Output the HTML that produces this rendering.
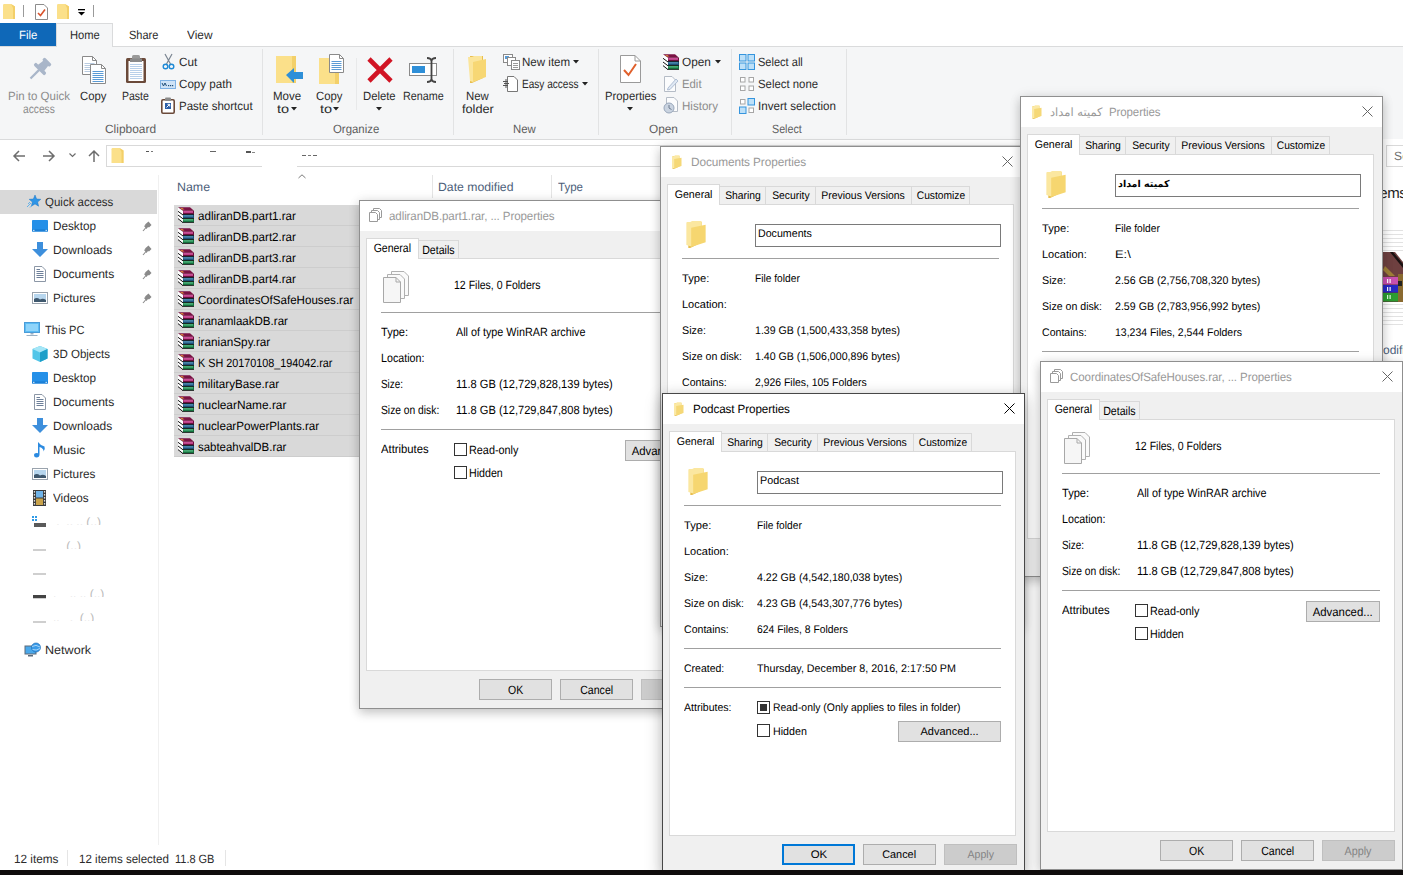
<!DOCTYPE html>
<html lang="en"><head><meta charset="utf-8"><title>Properties</title>
<style>
html,body{margin:0;padding:0}
body{width:1403px;height:875px;overflow:hidden;position:relative;background:#fff;-webkit-font-smoothing:antialiased;text-rendering:geometricPrecision;font-family:"Liberation Sans","DejaVu Sans",sans-serif;font-size:12px;color:#000}
.a,.t,.s,.m{position:absolute}
.t,.s,.m{white-space:nowrap;line-height:16px;height:16px}
.t{font-size:12px;color:#2b2b2b}
.s{font-size:12px;color:#000}
.m{font-size:11px;color:#000}
.g{color:#8a8a8a}
.dlg{position:absolute;background:#f0f0f0;border:1px solid #8f8f8f;box-sizing:border-box;box-shadow:0 4px 10px rgba(0,0,0,.20),0 0 12px rgba(0,0,0,.07)}
.dlg.act{border-color:#474747;box-shadow:0 6px 16px rgba(0,0,0,.25),0 0 10px rgba(0,0,0,.08)}
.tb{position:absolute;left:0;top:0;right:0;height:30px;background:#fff}
.ttl{position:absolute;top:7px;font-size:12px;line-height:16px;white-space:nowrap;color:#999;letter-spacing:-0.1px}
.act .ttl{color:#000}
.pan{position:absolute;background:#fff;border:1px solid #d9d9d9;box-sizing:border-box}
.tab{position:absolute;box-sizing:border-box;border:1px solid #d9d9d9;border-bottom:none;background:#f0f0f0;white-space:nowrap;text-align:center}
.tab.on{background:#fff;z-index:2}
.hr{position:absolute;height:1px;background:#a0a0a0}
.btn{position:absolute;box-sizing:border-box;border:1px solid #adadad;background:#e1e1e1;text-align:center;white-space:nowrap}
.btn.dis{background:#cccccc;border-color:#bfbfbf;color:#838383}
.btn.def{border:2px solid #0078d7}
.cb{position:absolute;width:13px;height:13px;box-sizing:border-box;border:1px solid #333;background:#fff}
.inp{position:absolute;box-sizing:border-box;border:1px solid #7a7a7a;background:#fff}
.row{position:absolute;left:174px;width:300px;height:21px;background:#d9d9d9;border-bottom:1px solid #cdcdcd;box-sizing:border-box}
svg{position:absolute;overflow:visible}
</style></head><body><div id="root" style="position:absolute;left:0;top:0;width:1403px;height:875px;opacity:.999">

<div class="a" style="left:0;top:46px;width:1403px;height:92px;background:#f5f6f7;border-top:1px solid #dadbdc;border-bottom:1px solid #dadbdc;box-sizing:content-box"></div>
<div class="a" style="left:0;top:23px;width:56px;height:23px;background:#0f68b8"></div>
<div class="t" style="left:19px;top:27px;transform:scaleX(0.949);transform-origin:0 0;color:#fff">File</div>
<div class="a" style="left:56px;top:23px;width:57px;height:24px;background:#f5f6f7;border:1px solid #dadbdc;border-bottom:none;box-sizing:border-box"></div>
<div class="t" style="left:70px;top:27px;transform:scaleX(0.932);transform-origin:0 0;">Home</div>
<div class="t" style="left:129px;top:27px;transform:scaleX(0.918);transform-origin:0 0;">Share</div>
<div class="t" style="left:187px;top:27px;transform:scaleX(0.988);transform-origin:0 0;">View</div>
<svg style="left:3px;top:4px" width="12" height="15" viewBox="0 0 12 15"><path d="M0 1.2 Q0 0 1.2 0 H8 L12 2.5 V15 H0 Z" fill="#fbe08a"/><path d="M8 0 L12 2.5 V15 H10 V4 Z" fill="#f3cf68"/></svg>
<div class="a" style="left:23px;top:5px;width:1px;height:12px;background:#9a9a9a"></div>
<svg style="left:35px;top:4px" width="13" height="16" viewBox="0 0 13 16"><path d="M.5 .5 H9 L12.5 4 V15.5 H.5 Z" fill="#fff" stroke="#8c8c8c"/><path d="M3 9 L5.5 11.5 L10 5.5" fill="none" stroke="#d9532c" stroke-width="1.6"/></svg>
<svg style="left:57px;top:4px" width="12" height="15" viewBox="0 0 12 15"><path d="M0 1.2 Q0 0 1.2 0 H8 L12 2.5 V15 H0 Z" fill="#fbe08a"/><path d="M8 0 L12 2.5 V15 H10 V4 Z" fill="#f3cf68"/></svg>
<svg style="left:78px;top:9px" width="8" height="8" viewBox="0 0 8 8"><rect x="0" y="0" width="7" height="1.3" fill="#000"/><path d="M0 3 H7 L3.5 6.5 Z" fill="#000"/></svg>
<div class="a" style="left:93px;top:5px;width:1px;height:12px;background:#9a9a9a"></div>
<div class="a" style="left:262px;top:49px;width:1px;height:86px;background:#e2e3e4"></div>
<div class="a" style="left:453px;top:49px;width:1px;height:86px;background:#e2e3e4"></div>
<div class="a" style="left:598px;top:49px;width:1px;height:86px;background:#e2e3e4"></div>
<div class="a" style="left:731px;top:49px;width:1px;height:86px;background:#e2e3e4"></div>
<div class="a" style="left:846px;top:49px;width:1px;height:86px;background:#e2e3e4"></div>
<div class="a" style="left:356px;top:58px;width:1px;height:52px;background:#e8e9ea"></div>
<div class="t" style="left:105px;top:121px;transform:scaleX(0.993);transform-origin:0 0;color:#5d5d5d">Clipboard</div>
<div class="t" style="left:333px;top:121px;transform:scaleX(0.950);transform-origin:0 0;color:#5d5d5d">Organize</div>
<div class="t" style="left:513px;top:121px;transform:scaleX(0.947);transform-origin:0 0;color:#5d5d5d">New</div>
<div class="t" style="left:649px;top:121px;transform:scaleX(0.984);transform-origin:0 0;color:#5d5d5d">Open</div>
<div class="t" style="left:772px;top:121px;transform:scaleX(0.893);transform-origin:0 0;color:#5d5d5d">Select</div>
<svg style="left:27px;top:59px" width="24" height="22" viewBox="0 0 24 22"><g transform="translate(13,10) rotate(45) scale(1.22)" fill="#a9b6c9"><rect x="-4.200" y="-9.500" width="8.400" height="3" rx="1.200"/><path d="M-2.800 -7 H2.800 L3.600 -1 H-3.600Z"/><rect x="-6.300" y="-1.500" width="12.600" height="3" rx="1.300"/><rect x="-.9" y="1" width="1.800" height="10"/></g></svg>
<div class="t" style="left:8px;top:88px;transform:scaleX(0.958);transform-origin:0 0;color:#8c8c8c">Pin to Quick</div>
<div class="t" style="left:23px;top:101px;transform:scaleX(0.853);transform-origin:0 0;color:#8c8c8c">access</div>
<svg style="left:82px;top:56px" width="15" height="19" viewBox="0 0 15 19"><path d="M.5 .5 H10.5 L14.5 4.5 V18.5 H.5 Z" fill="#fff" stroke="#8a8a8a"/><path d="M10.5 .5 V4.5 H14.5" fill="none" stroke="#8a8a8a"/><rect x="2.5" y="7" width="10" height="1" fill="#b9cbe0"/><rect x="2.5" y="9" width="10" height="1" fill="#b9cbe0"/><rect x="2.5" y="11" width="10" height="1" fill="#b9cbe0"/><rect x="2.5" y="13" width="10" height="1" fill="#b9cbe0"/><rect x="2.5" y="15" width="10" height="1" fill="#b9cbe0"/></svg>
<svg style="left:90px;top:64px" width="16" height="20" viewBox="0 0 16 20"><path d="M.5 .5 H11.5 L15.5 4.5 V19.5 H.5 Z" fill="#fff" stroke="#8a8a8a"/><path d="M11.5 .5 V4.5 H15.5" fill="none" stroke="#8a8a8a"/><rect x="2.5" y="7" width="11" height="1" fill="#5a9bd5"/><rect x="2.5" y="9" width="11" height="1" fill="#5a9bd5"/><rect x="2.5" y="11" width="11" height="1" fill="#5a9bd5"/><rect x="2.5" y="13" width="11" height="1" fill="#5a9bd5"/><rect x="2.5" y="15" width="11" height="1" fill="#5a9bd5"/><rect x="2.5" y="17" width="11" height="1" fill="#5a9bd5"/></svg>
<div class="t" style="left:80px;top:88px;transform:scaleX(0.944);transform-origin:0 0;">Copy</div>
<svg style="left:125px;top:54px" width="22" height="30" viewBox="0 0 22 30"><rect x="1" y="4" width="20" height="25" rx="1.5" fill="#6b4a3a"/><rect x="3.5" y="7" width="15" height="20" fill="#fff"/><rect x="7" y="1" width="8" height="6" rx="1.5" fill="#9a9a9a"/><rect x="5" y="4.5" width="12" height="3.5" fill="#8a8a8a"/><rect x="5" y="10" width="12" height="1" fill="#b8d0ea"/><rect x="5" y="12" width="12" height="1" fill="#b8d0ea"/><rect x="5" y="14" width="12" height="1" fill="#b8d0ea"/><rect x="5" y="16" width="12" height="1" fill="#b8d0ea"/><rect x="5" y="18" width="12" height="1" fill="#b8d0ea"/><rect x="5" y="20" width="12" height="1" fill="#b8d0ea"/><rect x="5" y="22" width="12" height="1" fill="#b8d0ea"/><rect x="5" y="24" width="12" height="1" fill="#b8d0ea"/></svg>
<div class="t" style="left:122px;top:88px;transform:scaleX(0.876);transform-origin:0 0;">Paste</div>
<svg style="left:162px;top:53px" width="13" height="17" viewBox="0 0 13 17"><path d="M3 1 L8.5 11 M10 1 L4.5 11" stroke="#7a8591" stroke-width="1.2" fill="none"/><circle cx="3.5" cy="13.5" r="2.3" fill="none" stroke="#1e8ad6" stroke-width="1.4"/><circle cx="9.5" cy="13.5" r="2.3" fill="none" stroke="#1e8ad6" stroke-width="1.4"/></svg>
<div class="t" style="left:179px;top:54px;transform:scaleX(0.978);transform-origin:0 0;">Cut</div>
<svg style="left:160px;top:80px" width="16" height="9" viewBox="0 0 16 9"><rect x=".5" y=".5" width="15" height="8" fill="#cfe3f7" stroke="#7fb2e5"/><path d="M2 3 L3.5 6 L5 3 L6.5 6" stroke="#1f4e79" fill="none" stroke-width="1"/><rect x="8" y="5" width="1.2" height="1.2" fill="#1f4e79"/><rect x="10" y="5" width="1.2" height="1.2" fill="#1f4e79"/><rect x="12" y="5" width="1.2" height="1.2" fill="#1f4e79"/></svg>
<div class="t" style="left:179px;top:76px;transform:scaleX(0.968);transform-origin:0 0;">Copy path</div>
<svg style="left:161px;top:97px" width="14" height="17" viewBox="0 0 14 17"><rect x=".8" y="2.8" width="12.4" height="13.4" rx="1.2" fill="#fff" stroke="#6b4a3a" stroke-width="1.6"/><rect x="4" y=".5" width="6" height="3.5" rx="1" fill="#8a8a8a"/><rect x="4" y="6" width="6" height="6" fill="#2b5fa8"/><path d="M5.5 10.5 L8.5 7.5 M6.5 7.3 H8.7 V9.5" stroke="#fff" fill="none" stroke-width="1"/></svg>
<div class="t" style="left:179px;top:98px;transform:scaleX(0.960);transform-origin:0 0;">Paste shortcut</div>
<svg style="left:276px;top:55px" width="28" height="30" viewBox="0 0 28 30"><path d="M0 1 H20 V28 H0 Z" fill="#fbe08a"/><path d="M16 1 H20 V28 H16Z" fill="#f3d06a"/><path d="M10 20 L18 13 V17 H27 V24 H18 V28 Z" fill="#2e8fd8"/></svg>
<div class="t" style="left:273px;top:88px;transform:scaleX(0.960);transform-origin:0 0;">Move</div>
<div class="t" style="left:277px;top:101px;transform:scaleX(1.209);transform-origin:0 0;">to</div>
<svg style="left:291px;top:107px" width="6" height="4" viewBox="0 0 6 4"><path d="M0 0 H6 L3 3.5Z" fill="#222"/></svg>
<svg style="left:319px;top:55px" width="28" height="30" viewBox="0 0 28 30"><path d="M0 3 H20 V29 H0 Z" fill="#fbe08a"/><path d="M16 3 H20 V29 H16Z" fill="#f3d06a"/></svg>
<svg style="left:329px;top:54px" width="15" height="19" viewBox="0 0 15 19"><path d="M.5 .5 H10.5 L14.5 4.5 V18.5 H.5 Z" fill="#fff" stroke="#8a8a8a"/><path d="M10.5 .5 V4.5 H14.5" fill="none" stroke="#8a8a8a"/><rect x="2.5" y="7" width="10" height="1" fill="#5a9bd5"/><rect x="2.5" y="9" width="10" height="1" fill="#5a9bd5"/><rect x="2.5" y="11" width="10" height="1" fill="#5a9bd5"/><rect x="2.5" y="13" width="10" height="1" fill="#5a9bd5"/><rect x="2.5" y="15" width="10" height="1" fill="#5a9bd5"/></svg>
<div class="t" style="left:316px;top:88px;transform:scaleX(0.944);transform-origin:0 0;">Copy</div>
<div class="t" style="left:320px;top:101px;transform:scaleX(1.209);transform-origin:0 0;">to</div>
<svg style="left:333px;top:107px" width="6" height="4" viewBox="0 0 6 4"><path d="M0 0 H6 L3 3.5Z" fill="#222"/></svg>
<svg style="left:367px;top:57px" width="26" height="26" viewBox="0 0 26 26"><path d="M2 2 L24 24 M24 2 L2 24" stroke="#d11424" stroke-width="4.6"/></svg>
<div class="t" style="left:363px;top:88px;transform:scaleX(0.941);transform-origin:0 0;">Delete</div>
<svg style="left:376px;top:107px" width="6" height="4" viewBox="0 0 6 4"><path d="M0 0 H6 L3 3.5Z" fill="#222"/></svg>
<svg style="left:409px;top:57px" width="30" height="26" viewBox="0 0 30 26"><rect x=".5" y="6.5" width="27" height="12" fill="#fff" stroke="#8a8a8a"/><rect x="3" y="9" width="13" height="7" fill="#2e8fd8"/><path d="M18 1 Q22 1 22.5 4 Q23 1 27 1 M22.5 3 V23 M18 25 Q22 25 22.5 22 Q23 25 27 25" fill="none" stroke="#444" stroke-width="1.8"/></svg>
<div class="t" style="left:403px;top:88px;transform:scaleX(0.897);transform-origin:0 0;">Rename</div>
<svg style="left:467px;top:56px" width="20" height="27" viewBox="0 0 20 27"><path d="M3 0 H16 V22 L5 27 H3 Z" fill="#e9bf4f"/><path d="M1 1 H5 L7 0 H15 V20 L6 26 L3 25 Z" fill="#fbe59b"/><path d="M6 6 L19 3 V21 L6 26 Z" fill="#f7d774"/></svg>
<div class="t" style="left:466px;top:88px;transform:scaleX(0.947);transform-origin:0 0;">New</div>
<div class="t" style="left:462px;top:101px;transform:scaleX(1.061);transform-origin:0 0;">folder</div>
<svg style="left:503px;top:54px" width="17" height="16" viewBox="0 0 17 16"><rect x=".5" y=".5" width="9" height="8" fill="#fff" stroke="#8a8a8a"/><rect x="2" y="2" width="4" height="3" fill="#5a9bd5"/><rect x="4.5" y="3.5" width="8" height="8" fill="#fff" stroke="#8a8a8a"/><rect x="8.5" y="6.500" width="8" height="9" fill="#fff" stroke="#8a8a8a"/><rect x="10" y="9" width="5" height="1" fill="#9a9a9a"/><rect x="10" y="11" width="5" height="1" fill="#9a9a9a"/><rect x="10" y="13" width="5" height="1" fill="#9a9a9a"/></svg>
<div class="t" style="left:522px;top:54px;transform:scaleX(0.963);transform-origin:0 0;">New item</div>
<svg style="left:573px;top:60px" width="6" height="4" viewBox="0 0 6 4"><path d="M0 0 H6 L3 3.5Z" fill="#222"/></svg>
<svg style="left:503px;top:76px" width="16" height="16" viewBox="0 0 16 16"><path d="M4.500 .5 H11 L14.5 4 V15.500 H4.500 Z" fill="#fff" stroke="#777"/><path d="M0 5.500 H5 M1 7.500 H6 M0 9.500 H5 M3 3 V12" stroke="#555" stroke-width="1" fill="none"/></svg>
<div class="t" style="left:522px;top:76px;transform:scaleX(0.839);transform-origin:0 0;">Easy access</div>
<svg style="left:582px;top:82px" width="6" height="4" viewBox="0 0 6 4"><path d="M0 0 H6 L3 3.5Z" fill="#222"/></svg>
<svg style="left:620px;top:55px" width="21" height="28" viewBox="0 0 21 28"><path d="M.5 .5 H15 L20.500 6 V27.500 H.5 Z" fill="#fff" stroke="#9a9a9a"/><path d="M15 .5 V6 H20.500" fill="none" stroke="#9a9a9a"/><path d="M4 15 L8.500 20 L16 9" fill="none" stroke="#e0602c" stroke-width="2"/></svg>
<div class="t" style="left:605px;top:88px;transform:scaleX(0.942);transform-origin:0 0;">Properties</div>
<svg style="left:627px;top:107px" width="6" height="4" viewBox="0 0 6 4"><path d="M0 0 H6 L3 3.5Z" fill="#222"/></svg>
<svg style="left:663px;top:54px" width="16" height="16" viewBox="0 0 16 16"><path d="M0 .5 L5 4 V15.500 L0 11.500Z" fill="#fff"/><path d="M0 4.300 L5 8 M0 8 L5 11.800 M0 11.600 L5 15.600" stroke="#111" stroke-width="1" fill="none"/><path d="M0 .3 H12 L16 3.700 H5Z" fill="#7a1244"/><path d="M2 1 H4.500 L6.500 2.500 H4Z" fill="#d8863a"/><rect x="5" y="3.700" width="11" height="3.600" fill="#6a0e3c"/><rect x="5.300" y="4.300" width="9.700" height="1.300" fill="#f468bc"/><rect x="5" y="7" width="11" height=".9" fill="#0a0a0a"/><rect x="5" y="7.800" width="11" height="3.500" fill="#1c4f78"/><rect x="5.300" y="8.300" width="9.700" height="1.200" fill="#5a9cc0"/><rect x="5" y="11" width="11" height=".9" fill="#0a0a0a"/><rect x="5" y="11.800" width="11" height="3.500" fill="#14703c"/><rect x="5.300" y="12.300" width="9.700" height="1.200" fill="#5cc48c"/><path d="M4 15.300 H16 V16 H5Z" fill="#0a0a0a"/></svg>
<div class="t" style="left:682px;top:54px;transform:scaleX(0.984);transform-origin:0 0;">Open</div>
<svg style="left:715px;top:60px" width="6" height="4" viewBox="0 0 6 4"><path d="M0 0 H6 L3 3.5Z" fill="#222"/></svg>
<svg style="left:664px;top:76px" width="15" height="16" viewBox="0 0 15 16"><path d="M.5 .5 H8 L11.500 4 V15.500 H.5 Z" fill="#fbfcfd" stroke="#b5bcc6"/><path d="M4 12 L12 3 L14 5 L6 13.500 L3.500 14Z" fill="#dfe8f3" stroke="#a3b4cc" stroke-width=".8"/></svg>
<div class="t" style="left:682px;top:76px;transform:scaleX(0.945);transform-origin:0 0;color:#8c8c8c">Edit</div>
<svg style="left:663px;top:97px" width="17" height="17" viewBox="0 0 17 17"><path d="M3.500 .5 H11 L14.500 4 V14.500 H3.500 Z" fill="#fbfcfd" stroke="#b5bcc6"/><circle cx="6" cy="11" r="5" fill="#c9d3e0" stroke="#98a6ba"/><path d="M6 8 V11 L8.500 12.500" stroke="#6e7c90" fill="none"/></svg>
<div class="t" style="left:682px;top:98px;transform:scaleX(0.963);transform-origin:0 0;color:#8c8c8c">History</div>
<svg style="left:739px;top:54px" width="16" height="16" viewBox="0 0 16 16"><rect x="0.5" y="0.5" width="6.500" height="6.500" fill="#bde0f8" stroke="#3595de"/><rect x="9.0" y="0.5" width="6.500" height="6.500" fill="#bde0f8" stroke="#3595de"/><rect x="0.5" y="9.0" width="6.500" height="6.500" fill="#bde0f8" stroke="#3595de"/><rect x="9.0" y="9.0" width="6.500" height="6.500" fill="#bde0f8" stroke="#3595de"/></svg>
<div class="t" style="left:758px;top:54px;transform:scaleX(0.920);transform-origin:0 0;">Select all</div>
<svg style="left:739px;top:76px" width="16" height="16" viewBox="0 0 16 16"><rect x="1.5" y="1.5" width="4.500" height="4.500" fill="#fff" stroke="#a6a6a6"/><rect x="10.0" y="1.5" width="4.500" height="4.500" fill="#fff" stroke="#a6a6a6"/><rect x="1.5" y="10.0" width="4.500" height="4.500" fill="#fff" stroke="#a6a6a6"/><rect x="10.0" y="10.0" width="4.500" height="4.500" fill="#fff" stroke="#a6a6a6"/></svg>
<div class="t" style="left:758px;top:76px;transform:scaleX(0.947);transform-origin:0 0;">Select none</div>
<svg style="left:739px;top:98px" width="16" height="16" viewBox="0 0 16 16"><rect x="1.5" y="1.5" width="4.500" height="4.500" fill="#fff" stroke="#a6a6a6"/><rect x="9.0" y="0.5" width="6.500" height="6.500" fill="#bde0f8" stroke="#3595de"/><rect x="0.5" y="9.0" width="6.500" height="6.500" fill="#bde0f8" stroke="#3595de"/><rect x="10.0" y="10.0" width="4.500" height="4.500" fill="#fff" stroke="#a6a6a6"/></svg>
<div class="t" style="left:758px;top:98px;transform:scaleX(0.966);transform-origin:0 0;">Invert selection</div>
<svg style="left:13px;top:150px" width="12" height="12" viewBox="0 0 12 12"><path d="M12 6 H1.5 M6 1 L1 6 L6 11" fill="none" stroke="#6d6d6d" stroke-width="1.5"/></svg>
<svg style="left:43px;top:150px" width="12" height="12" viewBox="0 0 12 12"><path d="M0 6 H10.500 M6 1 L11 6 L6 11" fill="none" stroke="#6d6d6d" stroke-width="1.5"/></svg>
<svg style="left:69px;top:153px" width="7" height="5" viewBox="0 0 7 5"><path d="M.5 .5 L3.500 3.500 L6.500 .5" fill="none" stroke="#6d6d6d" stroke-width="1.2"/></svg>
<svg style="left:88px;top:150px" width="12" height="12" viewBox="0 0 12 12"><path d="M6 12 V1.500 M1 6 L6 1 L11 6" fill="none" stroke="#6d6d6d" stroke-width="1.5"/></svg>
<div class="a" style="left:106px;top:145px;width:1270px;height:22px;border:1px solid #d9d9d9;box-sizing:border-box;background:#fff"></div>
<svg style="left:111px;top:148px" width="13" height="15" viewBox="0 0 12 15"><path d="M0 1.2 Q0 0 1.2 0 H8 L12 2.5 V15 H0 Z" fill="#fbe08a"/><path d="M8 0 L12 2.5 V15 H10 V4 Z" fill="#f3cf68"/></svg>
<div class="a" style="left:146px;top:151px;width:3px;height:1px;background:#555"></div>
<div class="a" style="left:151px;top:151px;width:2px;height:1px;background:#777"></div>
<div class="a" style="left:210px;top:151px;width:6px;height:1px;background:#666"></div>
<div class="a" style="left:246px;top:151px;width:5px;height:2px;background:#555"></div>
<div class="a" style="left:252px;top:152px;width:3px;height:1px;background:#888"></div>
<div class="a" style="left:302px;top:155px;width:4px;height:1px;background:#666"></div>
<div class="a" style="left:308px;top:155px;width:3px;height:1px;background:#777"></div>
<div class="a" style="left:313px;top:155px;width:4px;height:1px;background:#666"></div>
<div class="a" style="left:262px;top:166px;width:35px;height:1px;background:#fff"></div>
<div class="a" style="left:1386px;top:145px;width:30px;height:22px;border:1px solid #d9d9d9;box-sizing:border-box;background:#fff"></div>
<div class="t" style="left:1393px;top:148px;color:#6d6d6d">Search</div>
<div class="a" style="left:0;top:190px;width:157px;height:24px;background:#d9d9d9"></div>
<div class="a" style="left:158px;top:175px;width:1px;height:670px;background:#f0f0f0"></div>
<svg style="left:27px;top:195px" width="14" height="13" viewBox="0 0 14 13"><path d="M8 0 L9.600 4 L13.800 4.300 L10.600 7 L11.600 11.200 L8 8.900 L4.400 11.200 L5.400 7 L2.200 4.300 L6.400 4Z" fill="#2f95e6" stroke="#1a76c6" stroke-width=".5"/><path d="M0 12 L4 8 M1 9 L3 7 M3 12.500 L5 10.500" stroke="#5aaeea" stroke-width=".9" fill="none"/></svg>
<div class="t" style="left:45px;top:194px;transform:scaleX(0.958);transform-origin:0 0;">Quick access</div>
<svg style="left:32px;top:220px" width="16" height="12" viewBox="0 0 16 12"><rect x="0" y="0" width="16" height="11.500" rx=".8" fill="#2590e8"/><rect x="0" y="9.300" width="16" height="2.200" fill="#1a7fd6"/><rect x="1.200" y="9.800" width="1.200" height="1.200" fill="#e8f4ff"/><rect x="13.600" y="9.800" width="1.200" height="1.200" fill="#e8f4ff"/></svg>
<div class="t" style="left:53px;top:218px;transform:scaleX(0.978);transform-origin:0 0;">Desktop</div>
<svg style="left:142px;top:221px" width="10" height="11" viewBox="0 0 10 11"><path d="M1 10 L4 6.500" stroke="#8a8a8a" stroke-width="1.100"/><path d="M3 3.500 L6.500 .5 L9.500 4 L7 6.500 L6 6 L4.500 8 L2 5 L3.500 4 Z" fill="#8a8a8a"/></svg>
<svg style="left:32px;top:242px" width="16" height="15" viewBox="0 0 16 15"><path d="M5 0 H11 V7 H16 L8 15 L0 7 H5Z" fill="#3d8fdc"/></svg>
<div class="t" style="left:53px;top:242px;transform:scaleX(0.997);transform-origin:0 0;">Downloads</div>
<svg style="left:142px;top:245px" width="10" height="11" viewBox="0 0 10 11"><path d="M1 10 L4 6.500" stroke="#8a8a8a" stroke-width="1.100"/><path d="M3 3.500 L6.500 .5 L9.500 4 L7 6.500 L6 6 L4.500 8 L2 5 L3.500 4 Z" fill="#8a8a8a"/></svg>
<svg style="left:34px;top:266px" width="12" height="16" viewBox="0 0 12 16"><path d="M.5 .5 H8 L11.500 4 V15.500 H.5Z" fill="#fff" stroke="#8c97a6"/><path d="M2.500 5.500 H9.500 M2.500 7.500 H9.500 M2.500 9.500 H9.500 M2.500 11.500 H9.500 M2.500 3.500 H6" stroke="#6d7f99" stroke-width="1"/></svg>
<div class="t" style="left:53px;top:266px;transform:scaleX(1.010);transform-origin:0 0;">Documents</div>
<svg style="left:142px;top:269px" width="10" height="11" viewBox="0 0 10 11"><path d="M1 10 L4 6.500" stroke="#8a8a8a" stroke-width="1.100"/><path d="M3 3.500 L6.500 .5 L9.500 4 L7 6.500 L6 6 L4.500 8 L2 5 L3.500 4 Z" fill="#8a8a8a"/></svg>
<svg style="left:32px;top:292px" width="16" height="12" viewBox="0 0 16 12"><rect x=".5" y=".5" width="15" height="11" fill="#fff" stroke="#9aa3ad"/><rect x="2" y="2" width="12" height="8" fill="#b7d6ee"/><path d="M2 10 V7 Q5 5 8 7.500 Q11 6 14 8 V10Z" fill="#3f586e"/></svg>
<div class="t" style="left:53px;top:290px;transform:scaleX(0.980);transform-origin:0 0;">Pictures</div>
<svg style="left:142px;top:293px" width="10" height="11" viewBox="0 0 10 11"><path d="M1 10 L4 6.500" stroke="#8a8a8a" stroke-width="1.100"/><path d="M3 3.500 L6.500 .5 L9.500 4 L7 6.500 L6 6 L4.500 8 L2 5 L3.500 4 Z" fill="#8a8a8a"/></svg>
<svg style="left:24px;top:322px" width="16" height="15" viewBox="0 0 16 15"><rect x=".5" y=".5" width="15" height="10" fill="#5cbcf4" stroke="#4a9cd8"/><rect x="2" y="2" width="12" height="7" fill="#8fd4fa"/><rect x="6.500" y="11" width="3" height="1.500" fill="#9ab0c4"/><rect x="2.500" y="13" width="11" height="1" fill="#9ab0c4"/></svg>
<div class="t" style="left:45px;top:322px;transform:scaleX(0.926);transform-origin:0 0;">This PC</div>
<svg style="left:32px;top:346px" width="16" height="16" viewBox="0 0 16 16"><path d="M8 0 L15.500 3 V12.500 L8 16 L.5 12.500 V3Z" fill="#52c5e8"/><path d="M8 0 L15.500 3 L8 6.500 L.5 3Z" fill="#a5e6f7"/><path d="M8 6.500 L15.500 3 V12.500 L8 16Z" fill="#1d9fc9"/></svg>
<div class="t" style="left:53px;top:346px;transform:scaleX(0.960);transform-origin:0 0;">3D Objects</div>
<svg style="left:32px;top:372px" width="16" height="12" viewBox="0 0 16 12"><rect x="0" y="0" width="16" height="11.500" rx=".8" fill="#2590e8"/><rect x="0" y="9.300" width="16" height="2.200" fill="#1a7fd6"/><rect x="1.200" y="9.800" width="1.200" height="1.200" fill="#e8f4ff"/><rect x="13.600" y="9.800" width="1.200" height="1.200" fill="#e8f4ff"/></svg>
<div class="t" style="left:53px;top:370px;transform:scaleX(0.978);transform-origin:0 0;">Desktop</div>
<svg style="left:34px;top:394px" width="12" height="16" viewBox="0 0 12 16"><path d="M.5 .5 H8 L11.500 4 V15.500 H.5Z" fill="#fff" stroke="#8c97a6"/><path d="M2.500 5.500 H9.500 M2.500 7.500 H9.500 M2.500 9.500 H9.500 M2.500 11.500 H9.500 M2.500 3.500 H6" stroke="#6d7f99" stroke-width="1"/></svg>
<div class="t" style="left:53px;top:394px;transform:scaleX(1.010);transform-origin:0 0;">Documents</div>
<svg style="left:32px;top:418px" width="16" height="15" viewBox="0 0 16 15"><path d="M5 0 H11 V7 H16 L8 15 L0 7 H5Z" fill="#3d8fdc"/></svg>
<div class="t" style="left:53px;top:418px;transform:scaleX(0.997);transform-origin:0 0;">Downloads</div>
<svg style="left:34px;top:442px" width="12" height="16" viewBox="0 0 12 16"><path d="M4 0 Q6 3 10.500 4.500 Q11.500 7 9.500 9.500 Q10 6.500 5.500 5 V12.500 Q5.500 15.500 2.500 15.500 Q0 15.500 0 13.300 Q0 11 2.800 11 Q3.500 11 4 11.300 Z" fill="#2b8ae0"/></svg>
<div class="t" style="left:53px;top:442px;transform:scaleX(1.025);transform-origin:0 0;">Music</div>
<svg style="left:32px;top:468px" width="16" height="12" viewBox="0 0 16 12"><rect x=".5" y=".5" width="15" height="11" fill="#fff" stroke="#9aa3ad"/><rect x="2" y="2" width="12" height="8" fill="#b7d6ee"/><path d="M2 10 V7 Q5 5 8 7.500 Q11 6 14 8 V10Z" fill="#3f586e"/></svg>
<div class="t" style="left:53px;top:466px;transform:scaleX(0.980);transform-origin:0 0;">Pictures</div>
<svg style="left:33px;top:490px" width="13" height="16" viewBox="0 0 13 16"><rect x="0" y="0" width="13" height="16" fill="#3a3a3a"/><rect x="3" y="1" width="7" height="6.500" fill="#6fb3e8"/><rect x="3" y="8.500" width="7" height="6.500" fill="#c8a24a"/><rect x=".8" y="1" width="1.300" height="1.600" fill="#ddd"/><rect x="10.900" y="1" width="1.300" height="1.600" fill="#ddd"/><rect x=".8" y="4" width="1.300" height="1.600" fill="#ddd"/><rect x="10.900" y="4" width="1.300" height="1.600" fill="#ddd"/><rect x=".8" y="7" width="1.300" height="1.600" fill="#ddd"/><rect x="10.900" y="7" width="1.300" height="1.600" fill="#ddd"/><rect x=".8" y="10" width="1.300" height="1.600" fill="#ddd"/><rect x="10.900" y="10" width="1.300" height="1.600" fill="#ddd"/><rect x=".8" y="13" width="1.300" height="1.600" fill="#ddd"/><rect x="10.900" y="13" width="1.300" height="1.600" fill="#ddd"/></svg>
<div class="t" style="left:53px;top:490px;transform:scaleX(0.978);transform-origin:0 0;">Videos</div>
<svg style="left:24px;top:642px" width="17" height="16" viewBox="0 0 17 16"><rect x="1" y="4" width="11" height="8" fill="#4aa8ea" stroke="#5c6b7a"/><rect x="4" y="13" width="5" height="1.500" fill="#5c6b7a"/><circle cx="12" cy="5.500" r="4.500" fill="#3b9be8" stroke="#1f6fb8" stroke-width=".7"/><path d="M8 4.500 Q12 2 16 5 M8.500 7.500 Q12 9 16 6.500" stroke="#bfe2fb" fill="none" stroke-width=".8"/></svg>
<div class="t" style="left:45px;top:642px;transform:scaleX(1.048);transform-origin:0 0;">Network</div>
<svg style="left:32px;top:516px" width="14" height="12" viewBox="0 0 14 12"><rect x="0" y="0" width="2" height="2" fill="#2f9be8"/><rect x="3" y="0" width="2" height="2" fill="#2f9be8"/><rect x="0" y="3" width="2" height="2" fill="#2f9be8"/><rect x="3" y="3" width="2" height="2" fill="#2f9be8"/><rect x="2" y="7" width="12" height="4" fill="#5a5a5a"/></svg>
<div class="a" style="left:33px;top:549px;width:13px;height:2px;background:#cfcfcf"></div>
<div class="a" style="left:33px;top:573px;width:13px;height:2px;background:#cfcfcf"></div>
<div class="a" style="left:33px;top:597px;width:13px;height:2px;background:#cfcfcf"></div>
<div class="a" style="left:33px;top:621px;width:13px;height:2px;background:#cfcfcf"></div>
<div class="a" style="left:33px;top:595px;width:13px;height:3px;background:#444"></div>
<div class="t" style="left:53px;top:514px;color:#bbb;height:11px;overflow:hidden">&nbsp;. &nbsp;..&nbsp;.. (..)</div>
<div class="t" style="left:53px;top:538px;color:#bbb;height:11px;overflow:hidden">&nbsp; &nbsp; (..)</div>
<div class="t" style="left:53px;top:586px;color:#bbb;height:11px;overflow:hidden">. &nbsp; &nbsp;..&nbsp;.. (..)</div>
<div class="t" style="left:53px;top:610px;color:#bbb;height:11px;overflow:hidden">.. &nbsp; . &nbsp;(..)</div>
<div class="t" style="left:177px;top:179px;transform:scaleX(1.032);transform-origin:0 0;color:#4c607a">Name</div>
<svg style="left:298px;top:174px" width="8" height="5" viewBox="0 0 8 5"><path d="M.5 4 L4 .800 L7.500 4" fill="none" stroke="#7a7a7a" stroke-width="1"/></svg>
<div class="t" style="left:438px;top:179px;transform:scaleX(1.019);transform-origin:0 0;color:#4c607a">Date modified</div>
<div class="t" style="left:558px;top:179px;transform:scaleX(0.959);transform-origin:0 0;color:#4c607a">Type</div>
<div class="a" style="left:432px;top:175px;width:1px;height:23px;background:#e5e5e5"></div>
<div class="a" style="left:551px;top:175px;width:1px;height:23px;background:#e5e5e5"></div>
<div class="row" style="top:205px"></div>
<svg style="left:178px;top:207px" width="16" height="16" viewBox="0 0 16 16"><path d="M0 .5 L5 4 V15.500 L0 11.500Z" fill="#fff"/><path d="M0 4.300 L5 8 M0 8 L5 11.800 M0 11.600 L5 15.600" stroke="#111" stroke-width="1" fill="none"/><path d="M0 .3 H12 L16 3.700 H5Z" fill="#7a1244"/><path d="M2 1 H4.500 L6.500 2.500 H4Z" fill="#d8863a"/><rect x="5" y="3.700" width="11" height="3.600" fill="#6a0e3c"/><rect x="5.300" y="4.300" width="9.700" height="1.300" fill="#f468bc"/><rect x="5" y="7" width="11" height=".9" fill="#0a0a0a"/><rect x="5" y="7.800" width="11" height="3.500" fill="#1c4f78"/><rect x="5.300" y="8.300" width="9.700" height="1.200" fill="#5a9cc0"/><rect x="5" y="11" width="11" height=".9" fill="#0a0a0a"/><rect x="5" y="11.800" width="11" height="3.500" fill="#14703c"/><rect x="5.300" y="12.300" width="9.700" height="1.200" fill="#5cc48c"/><path d="M4 15.300 H16 V16 H5Z" fill="#0a0a0a"/></svg>
<div class="t" style="left:198px;top:208px;transform:scaleX(0.966);transform-origin:0 0;color:#000">adliranDB.part1.rar</div>
<div class="row" style="top:226px"></div>
<svg style="left:178px;top:228px" width="16" height="16" viewBox="0 0 16 16"><path d="M0 .5 L5 4 V15.500 L0 11.500Z" fill="#fff"/><path d="M0 4.300 L5 8 M0 8 L5 11.800 M0 11.600 L5 15.600" stroke="#111" stroke-width="1" fill="none"/><path d="M0 .3 H12 L16 3.700 H5Z" fill="#7a1244"/><path d="M2 1 H4.500 L6.500 2.500 H4Z" fill="#d8863a"/><rect x="5" y="3.700" width="11" height="3.600" fill="#6a0e3c"/><rect x="5.300" y="4.300" width="9.700" height="1.300" fill="#f468bc"/><rect x="5" y="7" width="11" height=".9" fill="#0a0a0a"/><rect x="5" y="7.800" width="11" height="3.500" fill="#1c4f78"/><rect x="5.300" y="8.300" width="9.700" height="1.200" fill="#5a9cc0"/><rect x="5" y="11" width="11" height=".9" fill="#0a0a0a"/><rect x="5" y="11.800" width="11" height="3.500" fill="#14703c"/><rect x="5.300" y="12.300" width="9.700" height="1.200" fill="#5cc48c"/><path d="M4 15.300 H16 V16 H5Z" fill="#0a0a0a"/></svg>
<div class="t" style="left:198px;top:229px;transform:scaleX(0.966);transform-origin:0 0;color:#000">adliranDB.part2.rar</div>
<div class="row" style="top:247px"></div>
<svg style="left:178px;top:249px" width="16" height="16" viewBox="0 0 16 16"><path d="M0 .5 L5 4 V15.500 L0 11.500Z" fill="#fff"/><path d="M0 4.300 L5 8 M0 8 L5 11.800 M0 11.600 L5 15.600" stroke="#111" stroke-width="1" fill="none"/><path d="M0 .3 H12 L16 3.700 H5Z" fill="#7a1244"/><path d="M2 1 H4.500 L6.500 2.500 H4Z" fill="#d8863a"/><rect x="5" y="3.700" width="11" height="3.600" fill="#6a0e3c"/><rect x="5.300" y="4.300" width="9.700" height="1.300" fill="#f468bc"/><rect x="5" y="7" width="11" height=".9" fill="#0a0a0a"/><rect x="5" y="7.800" width="11" height="3.500" fill="#1c4f78"/><rect x="5.300" y="8.300" width="9.700" height="1.200" fill="#5a9cc0"/><rect x="5" y="11" width="11" height=".9" fill="#0a0a0a"/><rect x="5" y="11.800" width="11" height="3.500" fill="#14703c"/><rect x="5.300" y="12.300" width="9.700" height="1.200" fill="#5cc48c"/><path d="M4 15.300 H16 V16 H5Z" fill="#0a0a0a"/></svg>
<div class="t" style="left:198px;top:250px;transform:scaleX(0.966);transform-origin:0 0;color:#000">adliranDB.part3.rar</div>
<div class="row" style="top:268px"></div>
<svg style="left:178px;top:270px" width="16" height="16" viewBox="0 0 16 16"><path d="M0 .5 L5 4 V15.500 L0 11.500Z" fill="#fff"/><path d="M0 4.300 L5 8 M0 8 L5 11.800 M0 11.600 L5 15.600" stroke="#111" stroke-width="1" fill="none"/><path d="M0 .3 H12 L16 3.700 H5Z" fill="#7a1244"/><path d="M2 1 H4.500 L6.500 2.500 H4Z" fill="#d8863a"/><rect x="5" y="3.700" width="11" height="3.600" fill="#6a0e3c"/><rect x="5.300" y="4.300" width="9.700" height="1.300" fill="#f468bc"/><rect x="5" y="7" width="11" height=".9" fill="#0a0a0a"/><rect x="5" y="7.800" width="11" height="3.500" fill="#1c4f78"/><rect x="5.300" y="8.300" width="9.700" height="1.200" fill="#5a9cc0"/><rect x="5" y="11" width="11" height=".9" fill="#0a0a0a"/><rect x="5" y="11.800" width="11" height="3.500" fill="#14703c"/><rect x="5.300" y="12.300" width="9.700" height="1.200" fill="#5cc48c"/><path d="M4 15.300 H16 V16 H5Z" fill="#0a0a0a"/></svg>
<div class="t" style="left:198px;top:271px;transform:scaleX(0.966);transform-origin:0 0;color:#000">adliranDB.part4.rar</div>
<div class="row" style="top:289px"></div>
<svg style="left:178px;top:291px" width="16" height="16" viewBox="0 0 16 16"><path d="M0 .5 L5 4 V15.500 L0 11.500Z" fill="#fff"/><path d="M0 4.300 L5 8 M0 8 L5 11.800 M0 11.600 L5 15.600" stroke="#111" stroke-width="1" fill="none"/><path d="M0 .3 H12 L16 3.700 H5Z" fill="#7a1244"/><path d="M2 1 H4.500 L6.500 2.500 H4Z" fill="#d8863a"/><rect x="5" y="3.700" width="11" height="3.600" fill="#6a0e3c"/><rect x="5.300" y="4.300" width="9.700" height="1.300" fill="#f468bc"/><rect x="5" y="7" width="11" height=".9" fill="#0a0a0a"/><rect x="5" y="7.800" width="11" height="3.500" fill="#1c4f78"/><rect x="5.300" y="8.300" width="9.700" height="1.200" fill="#5a9cc0"/><rect x="5" y="11" width="11" height=".9" fill="#0a0a0a"/><rect x="5" y="11.800" width="11" height="3.500" fill="#14703c"/><rect x="5.300" y="12.300" width="9.700" height="1.200" fill="#5cc48c"/><path d="M4 15.300 H16 V16 H5Z" fill="#0a0a0a"/></svg>
<div class="t" style="left:198px;top:292px;transform:scaleX(0.966);transform-origin:0 0;color:#000">CoordinatesOfSafeHouses.rar</div>
<div class="row" style="top:310px"></div>
<svg style="left:178px;top:312px" width="16" height="16" viewBox="0 0 16 16"><path d="M0 .5 L5 4 V15.500 L0 11.500Z" fill="#fff"/><path d="M0 4.300 L5 8 M0 8 L5 11.800 M0 11.600 L5 15.600" stroke="#111" stroke-width="1" fill="none"/><path d="M0 .3 H12 L16 3.700 H5Z" fill="#7a1244"/><path d="M2 1 H4.500 L6.500 2.500 H4Z" fill="#d8863a"/><rect x="5" y="3.700" width="11" height="3.600" fill="#6a0e3c"/><rect x="5.300" y="4.300" width="9.700" height="1.300" fill="#f468bc"/><rect x="5" y="7" width="11" height=".9" fill="#0a0a0a"/><rect x="5" y="7.800" width="11" height="3.500" fill="#1c4f78"/><rect x="5.300" y="8.300" width="9.700" height="1.200" fill="#5a9cc0"/><rect x="5" y="11" width="11" height=".9" fill="#0a0a0a"/><rect x="5" y="11.800" width="11" height="3.500" fill="#14703c"/><rect x="5.300" y="12.300" width="9.700" height="1.200" fill="#5cc48c"/><path d="M4 15.300 H16 V16 H5Z" fill="#0a0a0a"/></svg>
<div class="t" style="left:198px;top:313px;transform:scaleX(0.963);transform-origin:0 0;color:#000">iranamlaakDB.rar</div>
<div class="row" style="top:331px"></div>
<svg style="left:178px;top:333px" width="16" height="16" viewBox="0 0 16 16"><path d="M0 .5 L5 4 V15.500 L0 11.500Z" fill="#fff"/><path d="M0 4.300 L5 8 M0 8 L5 11.800 M0 11.600 L5 15.600" stroke="#111" stroke-width="1" fill="none"/><path d="M0 .3 H12 L16 3.700 H5Z" fill="#7a1244"/><path d="M2 1 H4.500 L6.500 2.500 H4Z" fill="#d8863a"/><rect x="5" y="3.700" width="11" height="3.600" fill="#6a0e3c"/><rect x="5.300" y="4.300" width="9.700" height="1.300" fill="#f468bc"/><rect x="5" y="7" width="11" height=".9" fill="#0a0a0a"/><rect x="5" y="7.800" width="11" height="3.500" fill="#1c4f78"/><rect x="5.300" y="8.300" width="9.700" height="1.200" fill="#5a9cc0"/><rect x="5" y="11" width="11" height=".9" fill="#0a0a0a"/><rect x="5" y="11.800" width="11" height="3.500" fill="#14703c"/><rect x="5.300" y="12.300" width="9.700" height="1.200" fill="#5cc48c"/><path d="M4 15.300 H16 V16 H5Z" fill="#0a0a0a"/></svg>
<div class="t" style="left:198px;top:334px;transform:scaleX(0.979);transform-origin:0 0;color:#000">iranianSpy.rar</div>
<div class="row" style="top:352px"></div>
<svg style="left:178px;top:354px" width="16" height="16" viewBox="0 0 16 16"><path d="M0 .5 L5 4 V15.500 L0 11.500Z" fill="#fff"/><path d="M0 4.300 L5 8 M0 8 L5 11.800 M0 11.600 L5 15.600" stroke="#111" stroke-width="1" fill="none"/><path d="M0 .3 H12 L16 3.700 H5Z" fill="#7a1244"/><path d="M2 1 H4.500 L6.500 2.500 H4Z" fill="#d8863a"/><rect x="5" y="3.700" width="11" height="3.600" fill="#6a0e3c"/><rect x="5.300" y="4.300" width="9.700" height="1.300" fill="#f468bc"/><rect x="5" y="7" width="11" height=".9" fill="#0a0a0a"/><rect x="5" y="7.800" width="11" height="3.500" fill="#1c4f78"/><rect x="5.300" y="8.300" width="9.700" height="1.200" fill="#5a9cc0"/><rect x="5" y="11" width="11" height=".9" fill="#0a0a0a"/><rect x="5" y="11.800" width="11" height="3.500" fill="#14703c"/><rect x="5.300" y="12.300" width="9.700" height="1.200" fill="#5cc48c"/><path d="M4 15.300 H16 V16 H5Z" fill="#0a0a0a"/></svg>
<div class="t" style="left:198px;top:355px;transform:scaleX(0.899);transform-origin:0 0;color:#000">K SH 20170108_194042.rar</div>
<div class="row" style="top:373px"></div>
<svg style="left:178px;top:375px" width="16" height="16" viewBox="0 0 16 16"><path d="M0 .5 L5 4 V15.500 L0 11.500Z" fill="#fff"/><path d="M0 4.300 L5 8 M0 8 L5 11.800 M0 11.600 L5 15.600" stroke="#111" stroke-width="1" fill="none"/><path d="M0 .3 H12 L16 3.700 H5Z" fill="#7a1244"/><path d="M2 1 H4.500 L6.500 2.500 H4Z" fill="#d8863a"/><rect x="5" y="3.700" width="11" height="3.600" fill="#6a0e3c"/><rect x="5.300" y="4.300" width="9.700" height="1.300" fill="#f468bc"/><rect x="5" y="7" width="11" height=".9" fill="#0a0a0a"/><rect x="5" y="7.800" width="11" height="3.500" fill="#1c4f78"/><rect x="5.300" y="8.300" width="9.700" height="1.200" fill="#5a9cc0"/><rect x="5" y="11" width="11" height=".9" fill="#0a0a0a"/><rect x="5" y="11.800" width="11" height="3.500" fill="#14703c"/><rect x="5.300" y="12.300" width="9.700" height="1.200" fill="#5cc48c"/><path d="M4 15.300 H16 V16 H5Z" fill="#0a0a0a"/></svg>
<div class="t" style="left:198px;top:376px;transform:scaleX(0.973);transform-origin:0 0;color:#000">militaryBase.rar</div>
<div class="row" style="top:394px"></div>
<svg style="left:178px;top:396px" width="16" height="16" viewBox="0 0 16 16"><path d="M0 .5 L5 4 V15.500 L0 11.500Z" fill="#fff"/><path d="M0 4.300 L5 8 M0 8 L5 11.800 M0 11.600 L5 15.600" stroke="#111" stroke-width="1" fill="none"/><path d="M0 .3 H12 L16 3.700 H5Z" fill="#7a1244"/><path d="M2 1 H4.500 L6.500 2.500 H4Z" fill="#d8863a"/><rect x="5" y="3.700" width="11" height="3.600" fill="#6a0e3c"/><rect x="5.300" y="4.300" width="9.700" height="1.300" fill="#f468bc"/><rect x="5" y="7" width="11" height=".9" fill="#0a0a0a"/><rect x="5" y="7.800" width="11" height="3.500" fill="#1c4f78"/><rect x="5.300" y="8.300" width="9.700" height="1.200" fill="#5a9cc0"/><rect x="5" y="11" width="11" height=".9" fill="#0a0a0a"/><rect x="5" y="11.800" width="11" height="3.500" fill="#14703c"/><rect x="5.300" y="12.300" width="9.700" height="1.200" fill="#5cc48c"/><path d="M4 15.300 H16 V16 H5Z" fill="#0a0a0a"/></svg>
<div class="t" style="left:198px;top:397px;transform:scaleX(0.989);transform-origin:0 0;color:#000">nuclearName.rar</div>
<div class="row" style="top:415px"></div>
<svg style="left:178px;top:417px" width="16" height="16" viewBox="0 0 16 16"><path d="M0 .5 L5 4 V15.500 L0 11.500Z" fill="#fff"/><path d="M0 4.300 L5 8 M0 8 L5 11.800 M0 11.600 L5 15.600" stroke="#111" stroke-width="1" fill="none"/><path d="M0 .3 H12 L16 3.700 H5Z" fill="#7a1244"/><path d="M2 1 H4.500 L6.500 2.500 H4Z" fill="#d8863a"/><rect x="5" y="3.700" width="11" height="3.600" fill="#6a0e3c"/><rect x="5.300" y="4.300" width="9.700" height="1.300" fill="#f468bc"/><rect x="5" y="7" width="11" height=".9" fill="#0a0a0a"/><rect x="5" y="7.800" width="11" height="3.500" fill="#1c4f78"/><rect x="5.300" y="8.300" width="9.700" height="1.200" fill="#5a9cc0"/><rect x="5" y="11" width="11" height=".9" fill="#0a0a0a"/><rect x="5" y="11.800" width="11" height="3.500" fill="#14703c"/><rect x="5.300" y="12.300" width="9.700" height="1.200" fill="#5cc48c"/><path d="M4 15.300 H16 V16 H5Z" fill="#0a0a0a"/></svg>
<div class="t" style="left:198px;top:418px;transform:scaleX(0.972);transform-origin:0 0;color:#000">nuclearPowerPlants.rar</div>
<div class="row" style="top:436px"></div>
<svg style="left:178px;top:438px" width="16" height="16" viewBox="0 0 16 16"><path d="M0 .5 L5 4 V15.500 L0 11.500Z" fill="#fff"/><path d="M0 4.300 L5 8 M0 8 L5 11.800 M0 11.600 L5 15.600" stroke="#111" stroke-width="1" fill="none"/><path d="M0 .3 H12 L16 3.700 H5Z" fill="#7a1244"/><path d="M2 1 H4.500 L6.500 2.500 H4Z" fill="#d8863a"/><rect x="5" y="3.700" width="11" height="3.600" fill="#6a0e3c"/><rect x="5.300" y="4.300" width="9.700" height="1.300" fill="#f468bc"/><rect x="5" y="7" width="11" height=".9" fill="#0a0a0a"/><rect x="5" y="7.800" width="11" height="3.500" fill="#1c4f78"/><rect x="5.300" y="8.300" width="9.700" height="1.200" fill="#5a9cc0"/><rect x="5" y="11" width="11" height=".9" fill="#0a0a0a"/><rect x="5" y="11.800" width="11" height="3.500" fill="#14703c"/><rect x="5.300" y="12.300" width="9.700" height="1.200" fill="#5cc48c"/><path d="M4 15.300 H16 V16 H5Z" fill="#0a0a0a"/></svg>
<div class="t" style="left:198px;top:439px;transform:scaleX(0.953);transform-origin:0 0;color:#000">sabteahvalDB.rar</div>
<div class="t" style="left:14px;top:851px;transform:scaleX(0.981);transform-origin:0 0;">12 items</div>
<div class="t" style="left:79px;top:851px;transform:scaleX(0.963);transform-origin:0 0;">12 items selected</div>
<div class="t" style="left:175px;top:851px;transform:scaleX(0.914);transform-origin:0 0;">11.8 GB</div>
<div class="a" style="left:67px;top:850px;width:1px;height:16px;background:#e5e5e5"></div>
<div class="a" style="left:225px;top:850px;width:1px;height:16px;background:#e5e5e5"></div>
<div class="a" style="left:1383px;top:139px;width:20px;height:731px;background:#fff"></div>
<div class="a" style="left:1386px;top:145px;width:30px;height:22px;border:1px solid #d9d9d9;box-sizing:border-box;background:#fff"></div>
<div class="t" style="left:1394px;top:148px;color:#6d6d6d;letter-spacing:0.3px">Search</div>
<div class="t" style="left:1375px;top:184px;font-size:15px;line-height:20px;height:20px;color:#1e1e1e;letter-spacing:-0.5px;left:1372px">Items</div>
<div class="a" style="left:1383px;top:230px;width:20px;height:1px;background:#e2e2e2"></div>
<div class="a" style="left:1383px;top:234px;width:20px;height:1px;background:#e2e2e2"></div>
<div class="a" style="left:1383px;top:238px;width:20px;height:1px;background:#e2e2e2"></div>
<div class="a" style="left:1383px;top:242px;width:20px;height:1px;background:#e2e2e2"></div>
<div class="a" style="left:1383px;top:246px;width:20px;height:1px;background:#e2e2e2"></div>
<div class="a" style="left:1383px;top:250px;width:20px;height:1px;background:#e2e2e2"></div>
<div class="a" style="left:1383px;top:304px;width:20px;height:1px;background:#e2e2e2"></div>
<div class="a" style="left:1383px;top:308px;width:20px;height:1px;background:#e2e2e2"></div>
<div class="a" style="left:1383px;top:312px;width:20px;height:1px;background:#e2e2e2"></div>
<div class="a" style="left:1383px;top:316px;width:20px;height:1px;background:#e2e2e2"></div>
<div class="a" style="left:1383px;top:320px;width:20px;height:1px;background:#e2e2e2"></div>
<div class="a" style="left:1383px;top:324px;width:20px;height:1px;background:#e2e2e2"></div>
<svg style="left:1383px;top:252px" width="20" height="50" viewBox="0 0 20 50"><rect x="0" y="0" width="20" height="50" fill="#5c3434"/><path d="M0 0 H12 L20 10 V25 H0Z" fill="#6e4040"/><path d="M12 0 H20 V10Z" fill="#fff"/><path d="M10 0 L20 12 V16 L7 0Z" fill="#1a1212"/><path d="M2 14 L12 24 H6 L0 18Z" fill="#a08038"/><rect x="0" y="25" width="16" height="7.500" fill="#c850b0"/><rect x="0" y="33" width="16" height="7.500" fill="#2828c4"/><rect x="0" y="41" width="16" height="8.500" fill="#2c9c30"/><rect x="15" y="22" width="5" height="28" fill="#8a6a30"/><rect x="4" y="27" width="1.200" height="4" fill="#fff"/><rect x="6.500" y="27" width="1.200" height="4" fill="#fff"/><rect x="4" y="35" width="1.200" height="4" fill="#fff"/><rect x="6.500" y="35" width="1.200" height="4" fill="#fff"/><rect x="4" y="43" width="1.200" height="4" fill="#dfd"/><rect x="6.500" y="43" width="1.200" height="4" fill="#dfd"/><rect x="15" y="29" width="4" height="5" fill="#222"/></svg>
<div class="t" style="left:1383px;top:342px;color:#4c607a">odified:</div>
<div class="dlg" style="left:359px;top:200px;width:363px;height:509px">
<div class="tb"></div>
<svg style="left:9px;top:7px" width="13" height="14" viewBox="0 0 13 14"><path d="M4.500 .5 H10.500 L12.500 2.500 V9.500 H4.500Z" fill="#fff" stroke="#9a9a9a"/><path d="M2.500 2.500 H8.500 L10.500 4.500 V11.500 H2.500Z" fill="#fff" stroke="#9a9a9a"/><path d="M.5 4.500 H6.500 L8.500 6.500 V13.500 H.5Z" fill="#fff" stroke="#9a9a9a"/></svg>
<div class="ttl" style="left:29px;top:7px;transform:scaleX(0.963);transform-origin:0 0;">adliranDB.part1.rar, ... Properties</div>
<svg style="left:341px;top:9px" width="11" height="11" viewBox="0 0 11 11"><path d="M.5 .5 L10.500 10.500 M10.500 .5 L.5 10.500" stroke="#666" stroke-width="1" fill="none"/></svg>
<div class="pan" style="left:6px;top:57px;width:348px;height:413px"></div>
<div class="tab on s" style="left:6px;top:37px;width:53px;height:21px;line-height:19px"><span style="display:inline-block;transform:scaleX(0.875);">General</span></div>
<div class="tab s" style="left:58px;top:39px;width:41px;height:18px;line-height:18px"><span style="display:inline-block;transform:scaleX(0.883);">Details</span></div>
<svg style="left:23px;top:70px" width="26" height="32" viewBox="0 0 26 32"><path d="M8.500 .5 H21 L25.500 5 V24.500 H8.500Z" fill="#fafafa" stroke="#b0b0b0"/><path d="M4.500 3.500 H17 L21.500 8 V27.500 H4.500Z" fill="#fafafa" stroke="#b0b0b0"/><path d="M.5 6.500 H13 L17.500 11 V31.500 H.5Z" fill="#f6f6f6" stroke="#a8a8a8"/><path d="M13 6.500 V11 H17.500" fill="none" stroke="#a8a8a8"/></svg>
<div class="s" style="left:94px;top:76px;transform:scaleX(0.877);transform-origin:0 0;">12 Files, 0 Folders</div>
<div class="hr" style="left:21px;top:111px;width:318px"></div>
<div class="s" style="left:21px;top:123px;transform:scaleX(0.924);transform-origin:0 0;">Type:</div>
<div class="s" style="left:96px;top:123px;transform:scaleX(0.899);transform-origin:0 0;">All of type WinRAR archive</div>
<div class="s" style="left:21px;top:149px;transform:scaleX(0.891);transform-origin:0 0;">Location:</div>
<div class="s" style="left:21px;top:175px;transform:scaleX(0.825);transform-origin:0 0;">Size:</div>
<div class="s" style="left:96px;top:175px;transform:scaleX(0.923);transform-origin:0 0;">11.8 GB (12,729,828,139 bytes)</div>
<div class="s" style="left:21px;top:201px;transform:scaleX(0.856);transform-origin:0 0;">Size on disk:</div>
<div class="s" style="left:96px;top:201px;transform:scaleX(0.923);transform-origin:0 0;">11.8 GB (12,729,847,808 bytes)</div>
<div class="s" style="left:98px;top:147px;color:#d0d0d0;height:9px;overflow:hidden;font-size:11px">.. &nbsp;. &nbsp; &nbsp;.. &nbsp; .&nbsp;.. &nbsp; &nbsp; &nbsp; &nbsp; &nbsp; &nbsp; &nbsp; &nbsp; &nbsp; &nbsp; &nbsp; &nbsp;.&nbsp;.</div>
<div class="hr" style="left:21px;top:228px;width:318px"></div>
<div class="s" style="left:21px;top:240px;transform:scaleX(0.940);transform-origin:0 0;">Attributes</div>
<div class="cb" style="left:94px;top:242px"></div>
<div class="s" style="left:109px;top:241px;transform:scaleX(0.903);transform-origin:0 0;">Read-only</div>
<div class="cb" style="left:94px;top:265px"></div>
<div class="s" style="left:109px;top:264px;transform:scaleX(0.888);transform-origin:0 0;">Hidden</div>
<div class="btn s" style="left:265px;top:239px;width:74px;height:21px;line-height:21px"><span style="display:inline-block;transform:scaleX(0.947);">Advanced...</span></div>
<div class="btn s" style="left:119px;top:478px;width:73px;height:21px;line-height:21px"><span style="display:inline-block;transform:scaleX(0.875);">OK</span></div>
<div class="btn s" style="left:200px;top:478px;width:73px;height:21px;line-height:21px"><span style="display:inline-block;transform:scaleX(0.880);">Cancel</span></div>
<div class="btn dis s" style="left:281px;top:478px;width:73px;height:21px;line-height:21px"><span style="display:inline-block;transform:scaleX(0.896);">Apply</span></div>
</div>
<div class="dlg" style="left:660px;top:146px;width:363px;height:481px">
<div class="tb"></div>
<svg style="left:11px;top:8px" width="10" height="14" viewBox="0 0 10 14"><path d="M.5 1 H7.500 V11.500 L2 14 H.5Z" fill="#ecc965"/><path d="M0 1.200 H2 L3 .3 H7.500 V10.500 L2.200 13.300 L0 12.800Z" fill="#fbe9a6"/><path d="M2.200 4 L9.500 2.800 V11 L2.200 13.500Z" fill="#f5d877"/></svg>
<div class="ttl" style="left:30px;top:7px;transform:scaleX(0.985);transform-origin:0 0;">Documents Properties</div>
<svg style="left:341px;top:9px" width="11" height="11" viewBox="0 0 11 11"><path d="M.5 .5 L10.500 10.500 M10.500 .5 L.5 10.500" stroke="#666" stroke-width="1" fill="none"/></svg>
<div class="pan" style="left:6px;top:57px;width:347px;height:385px"></div>
<div class="tab on m" style="left:6px;top:37px;width:53px;height:21px;line-height:20px"><span style="display:inline-block;transform:scaleX(0.965);">General</span></div>
<div class="tab m" style="left:58px;top:39px;width:47px;height:18px;line-height:19px"><span style="display:inline-block;transform:scaleX(0.940);">Sharing</span></div>
<div class="tab m" style="left:104px;top:39px;width:51px;height:18px;line-height:19px"><span style="display:inline-block;transform:scaleX(0.942);">Security</span></div>
<div class="tab m" style="left:154px;top:39px;width:97px;height:18px;line-height:19px"><span style="display:inline-block;transform:scaleX(0.949);">Previous Versions</span></div>
<div class="tab m" style="left:250px;top:39px;width:59px;height:18px;line-height:19px"><span style="display:inline-block;transform:scaleX(0.932);">Customize</span></div>
<svg style="left:25px;top:74px" width="20" height="27" viewBox="0 0 20 28"><path d="M2 1 H16 V22 L4 28 H2Z" fill="#e8be4e"/><path d="M0 2 Q0 1 1 1 H4 L6 0 H15 Q16 0 16 1 V20 L5 26.500 L0 25Z" fill="#fbe7a0"/><path d="M5 7 L20 4 V22 L5 27Z" fill="#f6d670"/></svg>
<div class="inp" style="left:94px;top:77px;width:246px;height:23px"></div>
<div class="m" style="left:97px;top:79px;transform:scaleX(0.968);transform-origin:0 0;">Documents</div>
<div class="hr" style="left:21px;top:111px;width:317px"></div>
<div class="m" style="left:21px;top:124px;transform:scaleX(1.019);transform-origin:0 0;">Type:</div>
<div class="m" style="left:94px;top:124px;transform:scaleX(0.928);transform-origin:0 0;">File folder</div>
<div class="m" style="left:21px;top:150px;transform:scaleX(1.001);transform-origin:0 0;">Location:</div>
<div class="m" style="left:21px;top:176px;transform:scaleX(0.976);transform-origin:0 0;">Size:</div>
<div class="m" style="left:94px;top:176px;transform:scaleX(0.964);transform-origin:0 0;">1.39 GB (1,500,433,358 bytes)</div>
<div class="m" style="left:21px;top:202px;transform:scaleX(0.963);transform-origin:0 0;">Size on disk:</div>
<div class="m" style="left:94px;top:202px;transform:scaleX(0.964);transform-origin:0 0;">1.40 GB (1,506,000,896 bytes)</div>
<div class="m" style="left:21px;top:228px;transform:scaleX(0.961);transform-origin:0 0;">Contains:</div>
<div class="m" style="left:94px;top:228px;transform:scaleX(0.947);transform-origin:0 0;">2,926 Files, 105 Folders</div>
<div class="hr" style="left:21px;top:254px;width:317px"></div>
</div>
<div class="dlg" style="left:1020px;top:96px;width:363px;height:481px">
<div class="tb"></div>
<svg style="left:11px;top:8px" width="10" height="14" viewBox="0 0 10 14"><path d="M.5 1 H7.500 V11.500 L2 14 H.5Z" fill="#ecc965"/><path d="M0 1.200 H2 L3 .3 H7.500 V10.500 L2.200 13.300 L0 12.800Z" fill="#fbe9a6"/><path d="M2.200 4 L9.500 2.800 V11 L2.200 13.500Z" fill="#f5d877"/></svg>
<div class="ttl" style="left:29px;top:7px;font-family:'DejaVu Sans',sans-serif;font-size:11.500px" dir="rtl">کمیته امداد</div>
<div class="ttl" style="left:88px;top:7px;transform:scaleX(0.957);transform-origin:0 0;">Properties</div>
<svg style="left:341px;top:9px" width="11" height="11" viewBox="0 0 11 11"><path d="M.5 .5 L10.500 10.500 M10.500 .5 L.5 10.500" stroke="#666" stroke-width="1" fill="none"/></svg>
<div class="pan" style="left:6px;top:57px;width:347px;height:385px"></div>
<div class="tab on m" style="left:6px;top:37px;width:53px;height:21px;line-height:20px"><span style="display:inline-block;transform:scaleX(0.965);">General</span></div>
<div class="tab m" style="left:58px;top:39px;width:47px;height:18px;line-height:19px"><span style="display:inline-block;transform:scaleX(0.940);">Sharing</span></div>
<div class="tab m" style="left:104px;top:39px;width:51px;height:18px;line-height:19px"><span style="display:inline-block;transform:scaleX(0.942);">Security</span></div>
<div class="tab m" style="left:154px;top:39px;width:97px;height:18px;line-height:19px"><span style="display:inline-block;transform:scaleX(0.949);">Previous Versions</span></div>
<div class="tab m" style="left:250px;top:39px;width:59px;height:18px;line-height:19px"><span style="display:inline-block;transform:scaleX(0.932);">Customize</span></div>
<svg style="left:25px;top:74px" width="20" height="27" viewBox="0 0 20 28"><path d="M2 1 H16 V22 L4 28 H2Z" fill="#e8be4e"/><path d="M0 2 Q0 1 1 1 H4 L6 0 H15 Q16 0 16 1 V20 L5 26.500 L0 25Z" fill="#fbe7a0"/><path d="M5 7 L20 4 V22 L5 27Z" fill="#f6d670"/></svg>
<div class="inp" style="left:94px;top:77px;width:246px;height:23px"></div>
<div class="m" style="left:97px;top:80px;font-weight:bold;font-size:9.500px;font-family:'DejaVu Sans',sans-serif" dir="rtl">کمیته امداد</div>
<div class="hr" style="left:21px;top:111px;width:317px"></div>
<div class="m" style="left:21px;top:124px;transform:scaleX(1.019);transform-origin:0 0;">Type:</div>
<div class="m" style="left:94px;top:124px;transform:scaleX(0.928);transform-origin:0 0;">File folder</div>
<div class="m" style="left:21px;top:150px;transform:scaleX(1.001);transform-origin:0 0;">Location:</div>
<div class="m" style="left:94px;top:150px;transform:scaleX(1.172);transform-origin:0 0;">E:\</div>
<div class="m" style="left:21px;top:176px;transform:scaleX(0.976);transform-origin:0 0;">Size:</div>
<div class="m" style="left:94px;top:176px;transform:scaleX(0.966);transform-origin:0 0;">2.56 GB (2,756,708,320 bytes)</div>
<div class="m" style="left:21px;top:202px;transform:scaleX(0.963);transform-origin:0 0;">Size on disk:</div>
<div class="m" style="left:94px;top:202px;transform:scaleX(0.966);transform-origin:0 0;">2.59 GB (2,783,956,992 bytes)</div>
<div class="m" style="left:21px;top:228px;transform:scaleX(0.961);transform-origin:0 0;">Contains:</div>
<div class="m" style="left:94px;top:228px;transform:scaleX(0.952);transform-origin:0 0;">13,234 Files, 2,544 Folders</div>
<div class="hr" style="left:21px;top:254px;width:317px"></div>
</div>
<div class="dlg act" style="left:662px;top:393px;width:363px;height:481px">
<div class="tb"></div>
<svg style="left:11px;top:8px" width="10" height="14" viewBox="0 0 10 14"><path d="M.5 1 H7.500 V11.500 L2 14 H.5Z" fill="#ecc965"/><path d="M0 1.200 H2 L3 .3 H7.500 V10.500 L2.200 13.300 L0 12.800Z" fill="#fbe9a6"/><path d="M2.200 4 L9.500 2.800 V11 L2.200 13.500Z" fill="#f5d877"/></svg>
<div class="ttl" style="left:30px;top:7px;transform:scaleX(0.972);transform-origin:0 0;">Podcast Properties</div>
<svg style="left:341px;top:9px" width="11" height="11" viewBox="0 0 11 11"><path d="M.5 .5 L10.500 10.500 M10.500 .5 L.5 10.500" stroke="#000" stroke-width="1" fill="none"/></svg>
<div class="pan" style="left:6px;top:57px;width:347px;height:385px"></div>
<div class="tab on m" style="left:6px;top:37px;width:53px;height:21px;line-height:20px"><span style="display:inline-block;transform:scaleX(0.965);">General</span></div>
<div class="tab m" style="left:58px;top:39px;width:47px;height:18px;line-height:19px"><span style="display:inline-block;transform:scaleX(0.940);">Sharing</span></div>
<div class="tab m" style="left:104px;top:39px;width:51px;height:18px;line-height:19px"><span style="display:inline-block;transform:scaleX(0.942);">Security</span></div>
<div class="tab m" style="left:154px;top:39px;width:97px;height:18px;line-height:19px"><span style="display:inline-block;transform:scaleX(0.949);">Previous Versions</span></div>
<div class="tab m" style="left:250px;top:39px;width:59px;height:18px;line-height:19px"><span style="display:inline-block;transform:scaleX(0.932);">Customize</span></div>
<svg style="left:25px;top:74px" width="20" height="27" viewBox="0 0 20 28"><path d="M2 1 H16 V22 L4 28 H2Z" fill="#e8be4e"/><path d="M0 2 Q0 1 1 1 H4 L6 0 H15 Q16 0 16 1 V20 L5 26.500 L0 25Z" fill="#fbe7a0"/><path d="M5 7 L20 4 V22 L5 27Z" fill="#f6d670"/></svg>
<div class="inp" style="left:94px;top:77px;width:246px;height:23px"></div>
<div class="m" style="left:97px;top:79px;transform:scaleX(0.978);transform-origin:0 0;">Podcast</div>
<div class="hr" style="left:21px;top:111px;width:317px"></div>
<div class="m" style="left:21px;top:124px;transform:scaleX(1.019);transform-origin:0 0;">Type:</div>
<div class="m" style="left:94px;top:124px;transform:scaleX(0.928);transform-origin:0 0;">File folder</div>
<div class="m" style="left:21px;top:150px;transform:scaleX(1.001);transform-origin:0 0;">Location:</div>
<div class="m" style="left:21px;top:176px;transform:scaleX(0.976);transform-origin:0 0;">Size:</div>
<div class="m" style="left:94px;top:176px;transform:scaleX(0.965);transform-origin:0 0;">4.22 GB (4,542,180,038 bytes)</div>
<div class="m" style="left:21px;top:202px;transform:scaleX(0.963);transform-origin:0 0;">Size on disk:</div>
<div class="m" style="left:94px;top:202px;transform:scaleX(0.965);transform-origin:0 0;">4.23 GB (4,543,307,776 bytes)</div>
<div class="m" style="left:21px;top:228px;transform:scaleX(0.961);transform-origin:0 0;">Contains:</div>
<div class="m" style="left:94px;top:228px;transform:scaleX(0.941);transform-origin:0 0;">624 Files, 8 Folders</div>
<div class="hr" style="left:21px;top:254px;width:317px"></div>
<div class="m" style="left:21px;top:267px;transform:scaleX(0.954);transform-origin:0 0;">Created:</div>
<div class="m" style="left:94px;top:267px;transform:scaleX(0.975);transform-origin:0 0;">Thursday, December 8, 2016, 2:17:50 PM</div>
<div class="hr" style="left:21px;top:293px;width:317px"></div>
<div class="m" style="left:21px;top:306px;transform:scaleX(0.960);transform-origin:0 0;">Attributes:</div>
<div class="cb" style="left:94px;top:307px"><div class="a" style="left:2px;top:2px;width:7px;height:7px;background:#333"></div></div>
<div class="m" style="left:110px;top:306px;transform:scaleX(0.946);transform-origin:0 0;">Read-only (Only applies to files in folder)</div>
<div class="cb" style="left:94px;top:330px"></div>
<div class="m" style="left:110px;top:330px;transform:scaleX(0.972);transform-origin:0 0;">Hidden</div>
<div class="btn m" style="left:235px;top:327px;width:103px;height:21px;line-height:21px"><span style="display:inline-block;transform:scaleX(1.000);">Advanced...</span></div>
<div class="btn def m" style="left:119px;top:450px;width:73px;height:21px;line-height:19px"><span style="display:inline-block;transform:scaleX(1.040);">OK</span></div>
<div class="btn m" style="left:200px;top:450px;width:73px;height:21px;line-height:21px"><span style="display:inline-block;transform:scaleX(0.989);">Cancel</span></div>
<div class="btn dis m" style="left:281px;top:450px;width:73px;height:21px;line-height:21px"><span style="display:inline-block;transform:scaleX(0.957);">Apply</span></div>
</div>
<div class="dlg" style="left:1040px;top:361px;width:363px;height:509px">
<div class="tb"></div>
<svg style="left:9px;top:7px" width="13" height="14" viewBox="0 0 13 14"><path d="M4.500 .5 H10.500 L12.500 2.500 V9.500 H4.500Z" fill="#fff" stroke="#9a9a9a"/><path d="M2.500 2.500 H8.500 L10.500 4.500 V11.500 H2.500Z" fill="#fff" stroke="#9a9a9a"/><path d="M.5 4.500 H6.500 L8.500 6.500 V13.500 H.5Z" fill="#fff" stroke="#9a9a9a"/></svg>
<div class="ttl" style="left:29px;top:7px;transform:scaleX(0.962);transform-origin:0 0;">CoordinatesOfSafeHouses.rar, ... Properties</div>
<svg style="left:341px;top:9px" width="11" height="11" viewBox="0 0 11 11"><path d="M.5 .5 L10.500 10.500 M10.500 .5 L.5 10.500" stroke="#666" stroke-width="1" fill="none"/></svg>
<div class="pan" style="left:6px;top:57px;width:348px;height:413px"></div>
<div class="tab on s" style="left:6px;top:37px;width:53px;height:21px;line-height:19px"><span style="display:inline-block;transform:scaleX(0.875);">General</span></div>
<div class="tab s" style="left:58px;top:39px;width:41px;height:18px;line-height:18px"><span style="display:inline-block;transform:scaleX(0.883);">Details</span></div>
<svg style="left:23px;top:70px" width="26" height="32" viewBox="0 0 26 32"><path d="M8.500 .5 H21 L25.500 5 V24.500 H8.500Z" fill="#fafafa" stroke="#b0b0b0"/><path d="M4.500 3.500 H17 L21.500 8 V27.500 H4.500Z" fill="#fafafa" stroke="#b0b0b0"/><path d="M.5 6.500 H13 L17.500 11 V31.500 H.5Z" fill="#f6f6f6" stroke="#a8a8a8"/><path d="M13 6.500 V11 H17.500" fill="none" stroke="#a8a8a8"/></svg>
<div class="s" style="left:94px;top:76px;transform:scaleX(0.877);transform-origin:0 0;">12 Files, 0 Folders</div>
<div class="hr" style="left:21px;top:111px;width:318px"></div>
<div class="s" style="left:21px;top:123px;transform:scaleX(0.924);transform-origin:0 0;">Type:</div>
<div class="s" style="left:96px;top:123px;transform:scaleX(0.899);transform-origin:0 0;">All of type WinRAR archive</div>
<div class="s" style="left:21px;top:149px;transform:scaleX(0.891);transform-origin:0 0;">Location:</div>
<div class="s" style="left:21px;top:175px;transform:scaleX(0.825);transform-origin:0 0;">Size:</div>
<div class="s" style="left:96px;top:175px;transform:scaleX(0.923);transform-origin:0 0;">11.8 GB (12,729,828,139 bytes)</div>
<div class="s" style="left:21px;top:201px;transform:scaleX(0.856);transform-origin:0 0;">Size on disk:</div>
<div class="s" style="left:96px;top:201px;transform:scaleX(0.923);transform-origin:0 0;">11.8 GB (12,729,847,808 bytes)</div>
<div class="s" style="left:98px;top:147px;color:#d0d0d0;height:9px;overflow:hidden;font-size:11px">.. &nbsp;. &nbsp; &nbsp;.. &nbsp; .&nbsp;.. &nbsp; &nbsp; &nbsp; &nbsp; &nbsp; &nbsp; &nbsp; &nbsp; &nbsp; &nbsp; &nbsp; &nbsp;.&nbsp;.</div>
<div class="hr" style="left:21px;top:228px;width:318px"></div>
<div class="s" style="left:21px;top:240px;transform:scaleX(0.940);transform-origin:0 0;">Attributes</div>
<div class="cb" style="left:94px;top:242px"></div>
<div class="s" style="left:109px;top:241px;transform:scaleX(0.903);transform-origin:0 0;">Read-only</div>
<div class="cb" style="left:94px;top:265px"></div>
<div class="s" style="left:109px;top:264px;transform:scaleX(0.888);transform-origin:0 0;">Hidden</div>
<div class="btn s" style="left:265px;top:239px;width:74px;height:21px;line-height:21px"><span style="display:inline-block;transform:scaleX(0.947);">Advanced...</span></div>
<div class="btn s" style="left:119px;top:478px;width:73px;height:21px;line-height:21px"><span style="display:inline-block;transform:scaleX(0.875);">OK</span></div>
<div class="btn s" style="left:200px;top:478px;width:73px;height:21px;line-height:21px"><span style="display:inline-block;transform:scaleX(0.880);">Cancel</span></div>
<div class="btn dis s" style="left:281px;top:478px;width:73px;height:21px;line-height:21px"><span style="display:inline-block;transform:scaleX(0.896);">Apply</span></div>
</div>
<div class="a" style="left:0;top:870px;width:1403px;height:5px;background:#0f0c0c"></div>
</div></body></html>
